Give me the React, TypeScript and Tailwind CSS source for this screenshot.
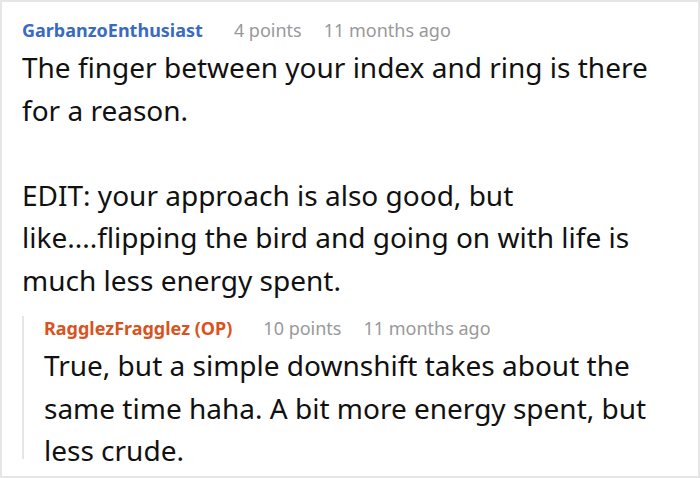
import { FunctionComponent } from "react"

const Meta: FunctionComponent<{ name: string; color: string; points: string; ago: string; className?: string }> = ({ name, color, points, ago, className }) => {
    return (
        <div className={`flex flex-row items-baseline text-[18px] leading-[24px] ${className ?? ""}`}>
            <span className={`font-bold ${color}`}>{name}</span>
            <span className="ml-[31px] text-[#999999]">{points}</span>
            <span className="ml-[22px] text-[#999999]">{ago}</span>
        </div>
    )
}

const App: FunctionComponent = () => {
    return (
        <div className="w-[700px] h-[478px] bg-white overflow-hidden border-2 border-[#e6e6e6] box-border pt-[16px] pl-[20px] pr-[36px] font-['Noto_Sans',sans-serif] text-[#111111]">
            <Meta name="GarbanzoEnthusiast" color="text-[#3a6bbf]" points="4 points" ago="11 months ago" />
            <p className="mt-[4px] text-[28px] leading-[42.5px]">
                The finger between your index and ring is there for a reason.
                <br />
                <br />
                EDIT: your approach is also good, but like....flipping the bird and going on with life is much less energy spent.
            </p>
            <div className="mt-[19px] h-[143px] border-l-2 border-[#e6e6e6] pl-[20px]">
                <Meta name="RagglezFragglez (OP)" color="text-[#d9531e]" points="10 points" ago="11 months ago" className="-mt-[4px]" />
                <p className="mt-[4px] text-[28px] leading-[42.5px]">
                    True, but a simple downshift takes about the same time haha. A bit more energy spent, but less crude.
                </p>
            </div>
        </div>
    )
}

export default App
